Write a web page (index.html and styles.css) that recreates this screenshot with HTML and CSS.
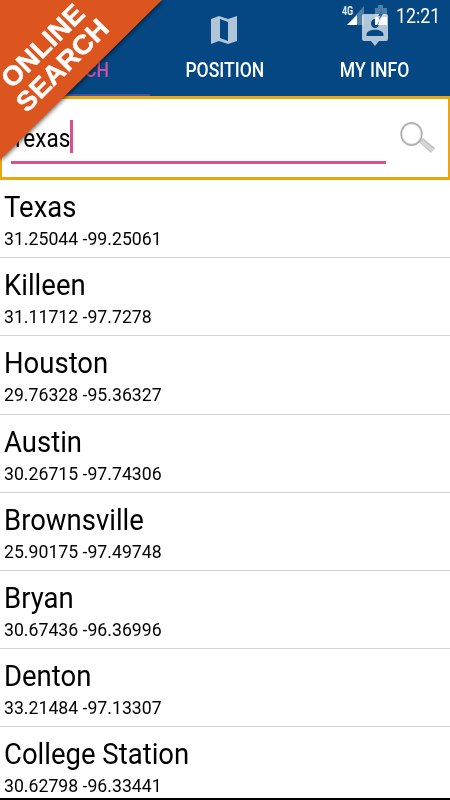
FILE: index.html
```html
<!DOCTYPE html>
<html lang="en">
<head>
  <meta charset="UTF-8">
  <meta name="viewport" content="width=device-width, initial-scale=1.0">
  <title>Online Search</title>
  <link rel="stylesheet" href="styles.css">
</head>
<body>
  <div class="app">
    <div class="status-bar">
      <svg class="signal" width="48" height="24" viewBox="0 0 48 24">
        <text x="0" y="11.500" class="network" textLength="11" lengthAdjust="spacingAndGlyphs">4G</text>
        <path d="M22 3v19H5z" fill="#fff" opacity=".3"/>
        <path d="M15 12v10H5z" fill="#fff"/>
        <path d="M36 2h5v3h4v17H33V5h3z" fill="#fff" opacity=".3"/>
        <path d="M33 14h3l1 4-2 4h-2zM40 14h5v8h-9z" fill="#fff"/>
        <path d="M40 7l-4 6h2l-1 4 4-6h-2z" fill="#2c6294"/>
      </svg>
      <span class="clock">12:21</span>
    </div>

    <div class="tabs">
      <div class="tab active"><span class="tab-icon"></span><span class="tab-label">SEARCH</span></div>
      <div class="tab">
        <svg class="tab-icon" width="26" height="28" viewBox="0 0 26 28">
          <path fill-rule="evenodd" d="M0 3l8-3 9 3 9-3v25l-9 3-9-3-8 3zM9 3v19l8 3V6z" fill="#b1c5d8"/>
        </svg>
        <span class="tab-label">POSITION</span>
      </div>
      <div class="tab">
        <svg class="tab-icon info-icon" width="26" height="32" viewBox="0 0 26 32">
          <path fill-rule="evenodd" d="M2 0h22q2 0 2 2v23q0 2-2 2h-7l-4 5-4-5H2q-2 0-2-2V2q0-2 2-2zM13 5a4 4.500 0 1 0 0 9 4 4.500 0 1 0 0-9zM4.500 22h17v-1.500c0-6.500-17-6.500-17 0z" fill="#b1c5d8"/>
        </svg>
        <span class="tab-label">MY INFO</span>
      </div>
    </div>

    <div class="search-box">
      <div class="search-field"><span class="search-text">Texas</span><span class="cursor"></span></div>
      <svg class="search-icon" width="36" height="34" viewBox="0 0 36 34">
        <path d="M19 20l4-4 12 10-4 5z" fill="#c4c4c4"/>
        <path d="M21.500 19l11 9.500" stroke="#d6d6d6" stroke-width="3"/>
        <ellipse cx="11.500" cy="12" rx="10.300" ry="11" fill="#fff" stroke="#b0b0b0" stroke-width="1.800"/>
        <ellipse cx="11.500" cy="12" rx="9.200" ry="9.900" fill="none" stroke="#dedede" stroke-width=".7"/>
      </svg>
    </div>

    <ul class="results" id="results"></ul>

    <div class="nav-bar"></div>

    <svg class="ribbon" width="180" height="180" viewBox="0 0 180 180">
      <path d="M0 0h162L0 160z" fill="#dd551e"/>
      <g class="ribbon-text">
        <text transform="translate(12 89.500) rotate(-45)" textLength="105" lengthAdjust="spacingAndGlyphs">ONLINE</text>
        <text transform="translate(27 113.500) rotate(-45)" textLength="118" lengthAdjust="spacingAndGlyphs">SEARCH</text>
      </g>
    </svg>
  </div>

  <script>
    const places = [
      { name: 'Texas', position: '31.25044 -99.25061' },
      { name: 'Killeen', position: '31.11712 -97.7278' },
      { name: 'Houston', position: '29.76328 -95.36327' },
      { name: 'Austin', position: '30.26715 -97.74306' },
      { name: 'Brownsville', position: '25.90175 -97.49748' },
      { name: 'Bryan', position: '30.67436 -96.36996' },
      { name: 'Denton', position: '33.21484 -97.13307' },
      { name: 'College Station', position: '30.62798 -96.33441' }
    ];

    const results = document.getElementById('results');

    places.forEach((place) => {
      const li = document.createElement('li');
      li.className = 'result';
      li.innerHTML = `
        <span class="place">${place.name}</span>
        <span class="coords">${place.position}</span>
      `;
      results.appendChild(li);
    });
  </script>
</body>
</html>
```
FILE: styles.css
```css
body {
  margin: 0;
  font-family: Roboto, sans-serif;
  background-color: #fff;
  color: #000;
}

.app {
  position: relative;
  width: 450px;
  height: 800px;
  overflow: hidden;
  display: flex;
  flex-direction: column;
}

/* the status bar lies over the tabs */
.status-bar {
  position: absolute;
  top: 3px;
  right: 11px;
  z-index: 1;
  display: flex;
  height: 27px;
  color: #fff;
}

.network {
  font-size: 12px;
  font-weight: 500;
  fill: #fff;
}

.clock {
  width: 43px;
  margin-left: 6px;
  font-size: 19.5px;
  line-height: 27px;
  transform: scaleX(0.91);
  transform-origin: left;
}

.tabs {
  flex: none;
  display: flex;
  height: 96px;
  background-color: #044783;
}

.tab {
  flex: 1;
  display: flex;
  flex-direction: column;
  align-items: center;
  box-sizing: border-box;
  padding-top: 16px;
  color: #fff;
}

.tab.active {
  color: #d252a0;
  border-bottom: 2px solid #4354a4;
}

.tab-icon {
  flex: none;
  height: 28px;
  margin-right: 2px;
}

.info-icon {
  height: 32px;
  margin: -2px 0 -2px 0;
}

.tab-label {
  margin-top: 15px;
  font-size: 19.5px;
  line-height: 24px;
  font-weight: 500;
  transform: scaleX(0.9);
}

.search-box {
  flex: none;
  display: flex;
  box-sizing: border-box;
  height: 84px;
  padding: 0 12px 0 9px;
  border: 3px solid #eba50e;
  border-left-width: 2px;
  border-right-width: 2px;
}

.search-field {
  flex: none;
  display: flex;
  align-items: center;
  box-sizing: border-box;
  width: 375px;
  height: 65px;
  padding-top: 17px;
  border-bottom: 3px solid #da5089;
}

.search-text {
  width: 59px;
  font-size: 25px;
  transform: scaleX(0.9);
  transform-origin: left;
}

.cursor {
  width: 3px;
  height: 33px;
  margin-top: -4px;
  background-color: #da5089;
}

.search-icon {
  flex: none;
  margin: 23px 0 0 14px;
}

.results {
  flex: 1;
  min-height: 0;
  overflow: hidden;
  list-style: none;
  margin: 0;
  padding: 0;
}

.result {
  display: flex;
  flex-direction: column;
  align-items: flex-start;
  box-sizing: border-box;
  height: 78.2px;
  padding: 9px 4px 0;
  border-bottom: 1px solid #d4d4d4;
}

.place {
  font-size: 29.5px;
  line-height: 36px;
  transform: scaleX(0.932);
  transform-origin: left;
}

.coords {
  font-size: 19px;
  line-height: 28px;
  transform: scaleX(0.93);
  transform-origin: left;
}

.nav-bar {
  flex: none;
  height: 2px;
  background-color: #000;
}

.ribbon {
  position: absolute;
  top: 0;
  left: 0;
  z-index: 2;
  filter: drop-shadow(1px 1px 2px rgba(0, 0, 0, 0.6));
}

.ribbon-text {
  font-family: "Liberation Sans", Arial, sans-serif;
  font-size: 27px;
  font-weight: bold;
  fill: #fff;
  stroke: #fff;
  stroke-width: 0.4px;
}
```
